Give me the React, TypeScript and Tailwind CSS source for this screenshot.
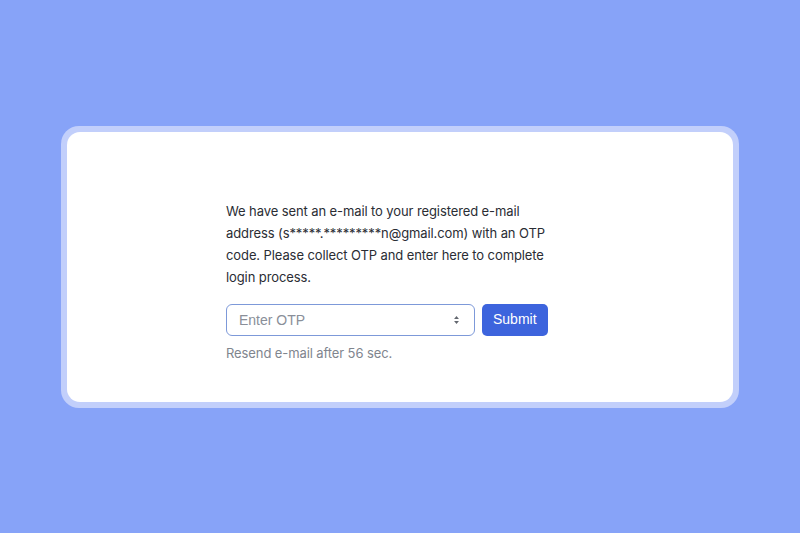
import { useState } from "react";

export default function App() {
  const [otp, setOtp] = useState("");

  return (
    <div className="flex min-h-[533px] items-center justify-center bg-[#87a3f8] font-['Inter',sans-serif]">
      <div className="w-[678px] rounded-[18px] bg-[#c2cffb] p-[6px]">
        <div className="flex h-[270px] justify-center rounded-[13px] bg-white pt-[68px]">
          <div className="w-[348px]">
            <p className="w-[326px] text-[13px] leading-[22px] tracking-[-0.1px] text-[#2a2d34]">
              We have sent an e-mail to your registered e-mail address
              (s*****.*********n@gmail.com) with an OTP code. Please collect OTP
              and enter here to complete login process.
            </p>
            <form
              className="mt-[16px] flex items-center gap-[7px]"
              onSubmit={(e) => e.preventDefault()}
            >
              <div className="relative">
                <input
                  type="text"
                  inputMode="numeric"
                  autoFocus
                  value={otp}
                  onChange={(e) => setOtp(e.target.value.replace(/\D/g, ""))}
                  placeholder="Enter OTP"
                  className="h-[32px] w-[249px] rounded-[6px] border border-[#7d99d9] bg-white pl-[12px] pr-[30px] font-['Liberation_Sans',sans-serif] text-[14px] text-[#2a2d34] outline-none placeholder:text-[#8a8f99]"
                />
                <svg
                  viewBox="0 0 8 14"
                  className="pointer-events-none absolute right-[15px] top-[9px] h-[14px] w-[7px] text-[#63676f]"
                >
                  <path d="M4 2.5 L6.8 5.8 H1.2 Z" fill="currentColor" />
                  <path d="M4 11.5 L6.8 8.2 H1.2 Z" fill="currentColor" />
                </svg>
              </div>
              <button
                type="submit"
                className="h-[32px] rounded-[5px] bg-[#3d64dd] px-[11px] font-['Liberation_Sans',sans-serif] text-[14px] text-white"
              >
                Submit
              </button>
            </form>
            <p className="mt-[6px] text-[13px] leading-[22px] tracking-[-0.1px] text-[#80858e]">
              Resend e-mail after 56 sec.
            </p>
          </div>
        </div>
      </div>
    </div>
  );
}
